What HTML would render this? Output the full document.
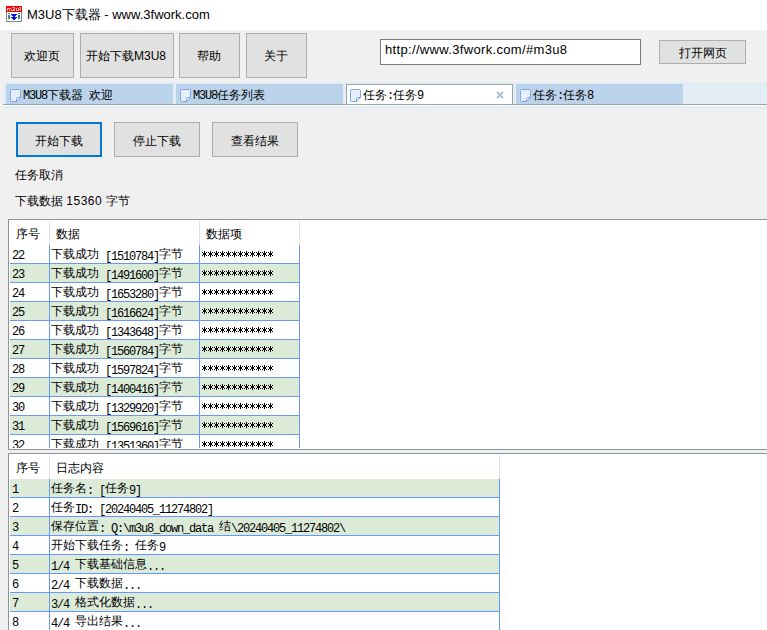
<!DOCTYPE html>
<html><head><meta charset="utf-8"><title>M3U8</title><style>
*{margin:0;padding:0;box-sizing:border-box}
html,body{width:767px;height:630px;overflow:hidden;background:#f0f0f0;font-family:"Liberation Sans",sans-serif;font-size:12px;color:#000}
.a{position:absolute}
#title{left:0;top:0;width:767px;height:30px;background:#fff}
#ttext{left:27px;top:7px;font-size:13px;line-height:16px;white-space:nowrap;color:#000}
.btn{position:absolute;background:#e1e1e1;border:1px solid #adadad;text-align:center;white-space:nowrap}
.tb{top:33px;height:45px;line-height:45px;font-size:12px;padding-right:2px}
#url{left:380px;top:39px;width:261px;height:26px;background:#fff;border:1px solid #7a7a7a;font-size:13px;line-height:16px;padding:2px 0 0 4px;white-space:nowrap;letter-spacing:0.33px}
#open{left:659px;top:40px;width:87px;height:24px;line-height:24px}
#strip{left:3px;top:82px;width:764px;height:27px;background:#e2eef3}
#stripline{left:3px;top:104px;width:764px;height:1px;background:#9aa2aa}
#stripwhite{left:3px;top:105px;width:764px;height:1px;background:#fff}
.tab{position:absolute;top:84px;height:20px;background:#bad3ea;white-space:nowrap;font-family:"Liberation Mono",monospace;font-size:10px;line-height:20px}
.tab i,.cell i{font-style:normal;font-size:12px;font-family:"Liberation Sans",sans-serif}
.tab u,.cell u{text-decoration:none;font-size:12px;letter-spacing:-1.2px;position:relative;top:1.5px}
.tab.act{background:#fff;border:1px solid #9aa2aa;border-bottom:none}
.ico{position:absolute;top:5px;width:11px;height:13px}
.tab.act .ico{top:4px}
.tab.act .tt{top:0}
.tt{position:absolute;top:1px}
.tab u{top:0}
.grid{position:absolute;background:#fff;border-top:1px solid #8d939a;border-left:1px solid #8d939a;overflow:hidden}
.hdr{position:absolute;top:2px;height:25px;line-height:25px;font-size:12px;white-space:nowrap}
.hsep{position:absolute;top:1px;width:1px;height:24px;background:#e0e0e0}
.row{position:absolute;left:1px;height:19px}
.row.g{background:#dbebd8}
.rline{position:absolute;left:1px;height:1px;background:#6699f8}
.vline{position:absolute;width:1px;background:#6699f8}
.cell{position:absolute;white-space:nowrap;font-family:"Liberation Mono",monospace;font-size:10px;line-height:18px}
.lbl{position:absolute;white-space:nowrap;font-size:12px;line-height:16px}
</style></head><body>
<svg width="0" height="0" style="position:absolute"><defs><g id="ast" fill="#000" shape-rendering="crispEdges"><path transform="translate(0 0)" d="M2 0h1v2h-1zM0 1h1v1h-1zM4 1h1v1h-1zM1 2h3v2h-3zM0 4h1v1h-1zM4 4h1v1h-1zM2 4h1v2h-1z"/><path transform="translate(6 0)" d="M2 0h1v2h-1zM0 1h1v1h-1zM4 1h1v1h-1zM1 2h3v2h-3zM0 4h1v1h-1zM4 4h1v1h-1zM2 4h1v2h-1z"/><path transform="translate(12 0)" d="M2 0h1v2h-1zM0 1h1v1h-1zM4 1h1v1h-1zM1 2h3v2h-3zM0 4h1v1h-1zM4 4h1v1h-1zM2 4h1v2h-1z"/><path transform="translate(18 0)" d="M2 0h1v2h-1zM0 1h1v1h-1zM4 1h1v1h-1zM1 2h3v2h-3zM0 4h1v1h-1zM4 4h1v1h-1zM2 4h1v2h-1z"/><path transform="translate(24 0)" d="M2 0h1v2h-1zM0 1h1v1h-1zM4 1h1v1h-1zM1 2h3v2h-3zM0 4h1v1h-1zM4 4h1v1h-1zM2 4h1v2h-1z"/><path transform="translate(30 0)" d="M2 0h1v2h-1zM0 1h1v1h-1zM4 1h1v1h-1zM1 2h3v2h-3zM0 4h1v1h-1zM4 4h1v1h-1zM2 4h1v2h-1z"/><path transform="translate(36 0)" d="M2 0h1v2h-1zM0 1h1v1h-1zM4 1h1v1h-1zM1 2h3v2h-3zM0 4h1v1h-1zM4 4h1v1h-1zM2 4h1v2h-1z"/><path transform="translate(42 0)" d="M2 0h1v2h-1zM0 1h1v1h-1zM4 1h1v1h-1zM1 2h3v2h-3zM0 4h1v1h-1zM4 4h1v1h-1zM2 4h1v2h-1z"/><path transform="translate(48 0)" d="M2 0h1v2h-1zM0 1h1v1h-1zM4 1h1v1h-1zM1 2h3v2h-3zM0 4h1v1h-1zM4 4h1v1h-1zM2 4h1v2h-1z"/><path transform="translate(54 0)" d="M2 0h1v2h-1zM0 1h1v1h-1zM4 1h1v1h-1zM1 2h3v2h-3zM0 4h1v1h-1zM4 4h1v1h-1zM2 4h1v2h-1z"/><path transform="translate(60 0)" d="M2 0h1v2h-1zM0 1h1v1h-1zM4 1h1v1h-1zM1 2h3v2h-3zM0 4h1v1h-1zM4 4h1v1h-1zM2 4h1v2h-1z"/><path transform="translate(66 0)" d="M2 0h1v2h-1zM0 1h1v1h-1zM4 1h1v1h-1zM1 2h3v2h-3zM0 4h1v1h-1zM4 4h1v1h-1zM2 4h1v2h-1z"/></g></defs></svg>
<div id="title" class="a"></div>
<svg class="a" style="left:6px;top:6px" width="16" height="16" viewBox="0 0 16 16" shape-rendering="crispEdges">
<rect x="0" y="0" width="16" height="16" fill="#8a8a8a"/>
<rect x="1" y="6" width="14" height="9" fill="#fff"/>
<rect x="0" y="0" width="16" height="6" fill="#ff0000"/>
<path fill="#ffb4b4" d="M1 2h4v1h-4zM1 3h1v2h-1zM3 3h1v2h-1zM5 3h1v2h-1zM6 1h3v1h-3zM7 3h2v1h-2zM6 4h3v1h-3zM8 2h1v1h-1zM10 2h1v3h-1zM12 2h1v2h-1zM10 4h3v1h-3zM13 1h2v1h-2zM13 3h2v1h-2zM14 2h1v3h-1z"/>
<path fill="#22aa22" d="M2 7h2v1h-2zM12 7h2v1h-2zM2 11h2v2h-2zM12 11h2v2h-2z"/>
<path fill="#4060ff" d="M2 9h2v2h-2zM12 9h2v2h-2z"/>
<path fill="#0000ee" d="M5 8h6v1h-6zM6 9h4v1h-4zM7 10h2v1h-2zM5 11h6v1h-6zM6 12h4v1h-4zM7 13h2v1h-2z" opacity="0.95"/>
</svg>
<div id="ttext" class="a">M3U8下载器 - www.3fwork.com</div>
<div class="btn tb" style="left:11px;width:63px">欢迎页</div>
<div class="btn tb" style="left:80px;width:94px">开始下载M3U8</div>
<div class="btn tb" style="left:179px;width:61px">帮助</div>
<div class="btn tb" style="left:246px;width:61px">关于</div>
<div id="url" class="a">http://www.3fwork.com/#m3u8</div>
<div id="open" class="btn">打开网页</div>
<div id="strip" class="a"></div>
<div class="tab" style="left:6px;width:167px"><svg class="ico" style="left:4px" width="11" height="13" viewBox="0 0 11 13"><path d="M1.5 0.5 H9.5 Q10.5 0.5 10.5 1.5 V8.5 L6.5 12.5 H1.5 Q0.5 12.5 0.5 11.5 V1.5 Q0.5 0.5 1.5 0.5 Z" fill="#e6eefa" stroke="#7aa7e8" stroke-width="1"/><path d="M10.5 8.5 H7.5 Q6.5 8.5 6.5 9.5 V12.5 Z" fill="#f4f8fd" stroke="#7aa7e8" stroke-width="1"/></svg><span class="tt" style="left:17px"><u>M3U8</u><i>下载器</i><u>&nbsp;</u><i>欢迎</i></span></div>
<div class="tab" style="left:176px;width:167px"><svg class="ico" style="left:4px" width="11" height="13" viewBox="0 0 11 13"><path d="M1.5 0.5 H9.5 Q10.5 0.5 10.5 1.5 V8.5 L6.5 12.5 H1.5 Q0.5 12.5 0.5 11.5 V1.5 Q0.5 0.5 1.5 0.5 Z" fill="#e6eefa" stroke="#7aa7e8" stroke-width="1"/><path d="M10.5 8.5 H7.5 Q6.5 8.5 6.5 9.5 V12.5 Z" fill="#f4f8fd" stroke="#7aa7e8" stroke-width="1"/></svg><span class="tt" style="left:17px"><u>M3U8</u><i>任务列表</i></span></div>
<div class="tab act" style="left:346px;width:167px"><svg class="ico" style="left:3px" width="11" height="13" viewBox="0 0 11 13"><path d="M1.5 0.5 H9.5 Q10.5 0.5 10.5 1.5 V8.5 L6.5 12.5 H1.5 Q0.5 12.5 0.5 11.5 V1.5 Q0.5 0.5 1.5 0.5 Z" fill="#e6eefa" stroke="#7aa7e8" stroke-width="1"/><path d="M10.5 8.5 H7.5 Q6.5 8.5 6.5 9.5 V12.5 Z" fill="#f4f8fd" stroke="#7aa7e8" stroke-width="1"/></svg><span class="tt" style="left:16px"><i>任务</i><u>:</u><i>任务</i><u>9</u></span><svg class="a" style="left:149px;top:6px" width="8" height="8" viewBox="0 0 8 8"><path d="M1 1 L7 7 M7 1 L1 7" stroke="#a9c0d8" stroke-width="2"/></svg></div>
<div class="tab" style="left:516px;width:167px"><svg class="ico" style="left:4px" width="11" height="13" viewBox="0 0 11 13"><path d="M1.5 0.5 H9.5 Q10.5 0.5 10.5 1.5 V8.5 L6.5 12.5 H1.5 Q0.5 12.5 0.5 11.5 V1.5 Q0.5 0.5 1.5 0.5 Z" fill="#e6eefa" stroke="#7aa7e8" stroke-width="1"/><path d="M10.5 8.5 H7.5 Q6.5 8.5 6.5 9.5 V12.5 Z" fill="#f4f8fd" stroke="#7aa7e8" stroke-width="1"/></svg><span class="tt" style="left:17px"><i>任务</i><u>:</u><i>任务</i><u>8</u></span></div>
<div id="stripline" class="a"></div><div id="stripwhite" class="a"></div>
<div class="btn" style="left:16px;top:122px;width:86px;height:35px;line-height:34px;border:2px solid #0078d7">开始下载</div>
<div class="btn" style="left:114px;top:122px;width:86px;height:35px;line-height:36px">停止下载</div>
<div class="btn" style="left:212px;top:122px;width:86px;height:35px;line-height:36px">查看结果</div>
<div class="lbl" style="left:15px;top:167px">任务取消</div>
<div class="lbl" style="left:15px;top:193px">下载数据 <span style="letter-spacing:0.5px">15360</span> 字节</div>
<div class="grid" style="left:8px;top:219px;width:759px;height:231px;border-bottom:1px solid #8d939a"><div class="hdr" style="left:7px">序号</div><div class="hdr" style="left:47px">数据</div><div class="hdr" style="left:197px">数据项</div><div class="hsep" style="left:40px"></div><div class="hsep" style="left:190px"></div><div class="hsep" style="left:290px"></div><div class="cell" style="left:3px;top:25px"><u>22</u></div><div class="cell" style="left:42px;top:25px"><i>下载成功</i><u>&nbsp;[1510784]</u><i>字节</i></div><svg class="a" style="left:193px;top:31px" width="72" height="6"><use href="#ast"/></svg><div class="rline" style="top:43px;width:290px"></div><div class="row g" style="top:44px;width:290px"></div><div class="cell" style="left:3px;top:44px"><u>23</u></div><div class="cell" style="left:42px;top:44px"><i>下载成功</i><u>&nbsp;[1491600]</u><i>字节</i></div><svg class="a" style="left:193px;top:50px" width="72" height="6"><use href="#ast"/></svg><div class="rline" style="top:62px;width:290px"></div><div class="cell" style="left:3px;top:63px"><u>24</u></div><div class="cell" style="left:42px;top:63px"><i>下载成功</i><u>&nbsp;[1653280]</u><i>字节</i></div><svg class="a" style="left:193px;top:69px" width="72" height="6"><use href="#ast"/></svg><div class="rline" style="top:81px;width:290px"></div><div class="row g" style="top:82px;width:290px"></div><div class="cell" style="left:3px;top:82px"><u>25</u></div><div class="cell" style="left:42px;top:82px"><i>下载成功</i><u>&nbsp;[1616624]</u><i>字节</i></div><svg class="a" style="left:193px;top:88px" width="72" height="6"><use href="#ast"/></svg><div class="rline" style="top:100px;width:290px"></div><div class="cell" style="left:3px;top:101px"><u>26</u></div><div class="cell" style="left:42px;top:101px"><i>下载成功</i><u>&nbsp;[1343648]</u><i>字节</i></div><svg class="a" style="left:193px;top:107px" width="72" height="6"><use href="#ast"/></svg><div class="rline" style="top:119px;width:290px"></div><div class="row g" style="top:120px;width:290px"></div><div class="cell" style="left:3px;top:120px"><u>27</u></div><div class="cell" style="left:42px;top:120px"><i>下载成功</i><u>&nbsp;[1560784]</u><i>字节</i></div><svg class="a" style="left:193px;top:126px" width="72" height="6"><use href="#ast"/></svg><div class="rline" style="top:138px;width:290px"></div><div class="cell" style="left:3px;top:139px"><u>28</u></div><div class="cell" style="left:42px;top:139px"><i>下载成功</i><u>&nbsp;[1597824]</u><i>字节</i></div><svg class="a" style="left:193px;top:145px" width="72" height="6"><use href="#ast"/></svg><div class="rline" style="top:157px;width:290px"></div><div class="row g" style="top:158px;width:290px"></div><div class="cell" style="left:3px;top:158px"><u>29</u></div><div class="cell" style="left:42px;top:158px"><i>下载成功</i><u>&nbsp;[1400416]</u><i>字节</i></div><svg class="a" style="left:193px;top:164px" width="72" height="6"><use href="#ast"/></svg><div class="rline" style="top:176px;width:290px"></div><div class="cell" style="left:3px;top:177px"><u>30</u></div><div class="cell" style="left:42px;top:177px"><i>下载成功</i><u>&nbsp;[1329920]</u><i>字节</i></div><svg class="a" style="left:193px;top:183px" width="72" height="6"><use href="#ast"/></svg><div class="rline" style="top:195px;width:290px"></div><div class="row g" style="top:196px;width:290px"></div><div class="cell" style="left:3px;top:196px"><u>31</u></div><div class="cell" style="left:42px;top:196px"><i>下载成功</i><u>&nbsp;[1569616]</u><i>字节</i></div><svg class="a" style="left:193px;top:202px" width="72" height="6"><use href="#ast"/></svg><div class="rline" style="top:214px;width:290px"></div><div class="cell" style="left:3px;top:215px"><u>32</u></div><div class="cell" style="left:42px;top:215px"><i>下载成功</i><u>&nbsp;[1351360]</u><i>字节</i></div><svg class="a" style="left:193px;top:221px" width="72" height="6"><use href="#ast"/></svg><div class="rline" style="top:233px;width:290px"></div><div class="vline" style="left:40px;top:25px;height:220px"></div><div class="vline" style="left:190px;top:25px;height:220px"></div><div class="vline" style="left:290px;top:25px;height:220px"></div><div class="a" style="left:0;top:228px;width:760px;height:2px;background:#fff"></div></div>
<div class="grid" style="left:8px;top:453px;width:759px;height:177px"><div class="hdr" style="left:7px">序号</div><div class="hdr" style="left:47px">日志内容</div><div class="hsep" style="left:40px"></div><div class="hsep" style="left:490px"></div><div class="row g" style="top:25px;width:490px"></div><div class="cell" style="left:3px;top:25px"><u>1</u></div><div class="cell" style="left:42px;top:25px"><i>任务名</i><u>:&nbsp;[</u><i>任务</i><u>9]</u></div><div class="rline" style="top:43px;width:490px"></div><div class="cell" style="left:3px;top:44px"><u>2</u></div><div class="cell" style="left:42px;top:44px"><i>任务</i><u>ID:&nbsp;[20240405_11274802]</u></div><div class="rline" style="top:62px;width:490px"></div><div class="row g" style="top:63px;width:490px"></div><div class="cell" style="left:3px;top:63px"><u>3</u></div><div class="cell" style="left:42px;top:63px"><i>保存位置</i><u>:&nbsp;Q:\m3u8_down_data&nbsp;</u><i>结</i><u>\20240405_11274802\</u></div><div class="rline" style="top:81px;width:490px"></div><div class="cell" style="left:3px;top:82px"><u>4</u></div><div class="cell" style="left:42px;top:82px"><i>开始下载任务</i><u>:&nbsp;</u><i>任务</i><u>9</u></div><div class="rline" style="top:100px;width:490px"></div><div class="row g" style="top:101px;width:490px"></div><div class="cell" style="left:3px;top:101px"><u>5</u></div><div class="cell" style="left:42px;top:101px"><u>1/4&nbsp;</u><i>下载基础信息</i><u>...</u></div><div class="rline" style="top:119px;width:490px"></div><div class="cell" style="left:3px;top:120px"><u>6</u></div><div class="cell" style="left:42px;top:120px"><u>2/4&nbsp;</u><i>下载数据</i><u>...</u></div><div class="rline" style="top:138px;width:490px"></div><div class="row g" style="top:139px;width:490px"></div><div class="cell" style="left:3px;top:139px"><u>7</u></div><div class="cell" style="left:42px;top:139px"><u>3/4&nbsp;</u><i>格式化数据</i><u>...</u></div><div class="rline" style="top:157px;width:490px"></div><div class="cell" style="left:3px;top:158px"><u>8</u></div><div class="cell" style="left:42px;top:158px"><u>4/4&nbsp;</u><i>导出结果</i><u>...</u></div><div class="rline" style="top:176px;width:490px"></div><div class="vline" style="left:40px;top:25px;height:160px"></div><div class="vline" style="left:490px;top:25px;height:160px"></div></div>
</body></html>
